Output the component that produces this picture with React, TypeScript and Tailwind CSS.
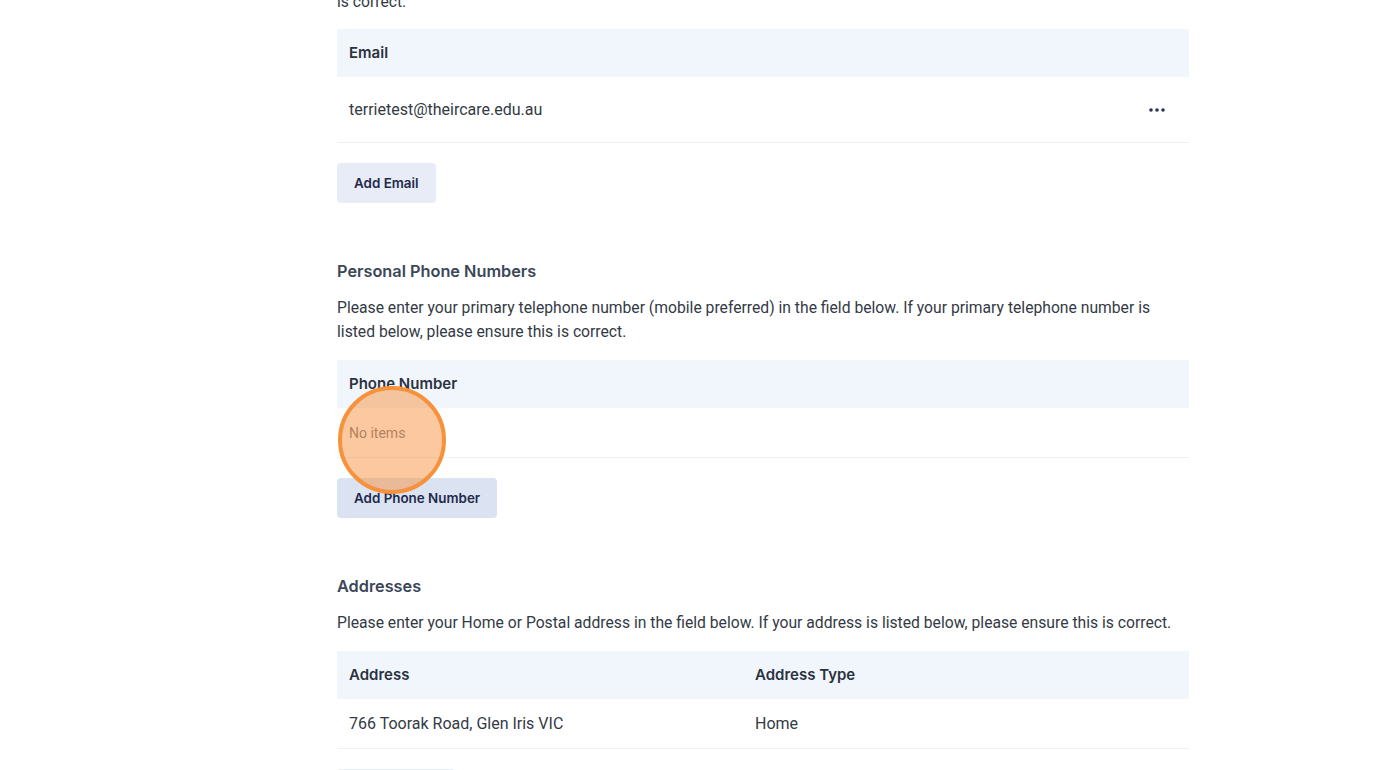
import React from 'react';

const body = { fontFamily: 'Roboto, "Liberation Sans", sans-serif' };
const ui = { fontFamily: 'Inter, "Liberation Sans", sans-serif' };

function Dots() {
  return (
    <svg width="16" height="4" viewBox="0 0 16 4" fill="#2b3252">
      <circle cx="2" cy="2" r="1.8" />
      <circle cx="8" cy="2" r="1.8" />
      <circle cx="14" cy="2" r="1.8" />
    </svg>
  );
}

function AddButton({ label, hover }: { label: string; hover?: boolean }) {
  return (
    <button
      style={ui}
      className={`h-10 px-[17px] rounded-[4px] text-[13.4px] font-semibold text-[#1f2a4d] ${
        hover ? 'bg-[#dbe2f2]' : 'bg-[#e8ecf6]'
      }`}
    >
      {label}
    </button>
  );
}

function SectionTitle({ children }: { children: React.ReactNode }) {
  return (
    <h2 style={ui} className="text-[16.3px] leading-6 font-semibold text-[#3b4759] pt-px">
      {children}
    </h2>
  );
}

function Para({ children }: { children: React.ReactNode }) {
  return (
    <p style={body} className="text-[15.7px] leading-6 text-[#333a45]">
      {children}
    </p>
  );
}

function HeaderCell({ children, className = '' }: { children: React.ReactNode; className?: string }) {
  return (
    <div style={ui} className={`px-3 text-[15px] font-semibold text-[#2a323e] ${className}`}>
      {children}
    </div>
  );
}

export default function App() {
  return (
    <div className="min-h-screen bg-white overflow-hidden">
      <div className="flex">
        <div className="w-[337px] shrink-0" />
        <div className="w-[852px] -mt-[10px]">
          {/* Email */}
          <section>
            <Para>is correct.</Para>
            <div className="mt-[15px]">
              <div className="h-12 bg-[#f1f6fd] flex items-center">
                <HeaderCell>Email</HeaderCell>
              </div>
              <div className="h-[66px] border-b border-[#eef0f3] flex items-center justify-between">
                <span style={body} className="px-3 text-[16px] text-[#333a45]">
                  terrietest@theircare.edu.au
                </span>
                <span className="pr-[24px] flex items-center">
                  <Dots />
                </span>
              </div>
            </div>
            <div className="mt-5">
              <AddButton label="Add Email" />
            </div>
          </section>

          {/* Phone */}
          <section className="mt-[55px]">
            <SectionTitle>Personal Phone Numbers</SectionTitle>
            <div className="mt-[13px]">
              <Para>
                Please enter your primary telephone number (mobile preferred) in the field below. If your primary
                telephone number is listed below, please ensure this is correct.
              </Para>
            </div>
            <div className="mt-[16px]">
              <div className="h-12 bg-[#f1f6fd] flex items-center">
                <HeaderCell>Phone Number</HeaderCell>
              </div>
              <div className="relative h-[50px] border-b border-[#eef0f3] flex items-center">
                <span style={body} className="px-3 pt-0.5 text-[14px] text-[#6b7280]">
                  No items
                </span>
                <div className="absolute left-[1px] top-[-22px] w-[108px] h-[108px] rounded-full border-[4px] border-[#f6913c] bg-[#f7923f]/50" />
              </div>
            </div>
            <div className="mt-5">
              <AddButton label="Add Phone Number" hover />
            </div>
          </section>

          {/* Addresses */}
          <section className="mt-[55px]">
            <SectionTitle>Addresses</SectionTitle>
            <div className="mt-[13px]">
              <Para>
                Please enter your Home or Postal address in the field below. If your address is listed below, please
                ensure this is correct.
              </Para>
            </div>
            <div className="mt-[16px]">
              <div className="h-12 bg-[#f1f6fd] flex items-center">
                <HeaderCell className="w-[406px]">Address</HeaderCell>
                <HeaderCell>Address Type</HeaderCell>
              </div>
              <div className="h-[50px] border-b border-[#eef0f3] flex items-center">
                <span style={body} className="w-[406px] px-3 text-[16px] text-[#333a45]">
                  766 Toorak Road, Glen Iris VIC
                </span>
                <span style={body} className="px-3 text-[16px] text-[#333a45]">
                  Home
                </span>
              </div>
            </div>
            <div className="mt-5">
              <AddButton label="Add Address" />
            </div>
          </section>
        </div>
      </div>
    </div>
  );
}
